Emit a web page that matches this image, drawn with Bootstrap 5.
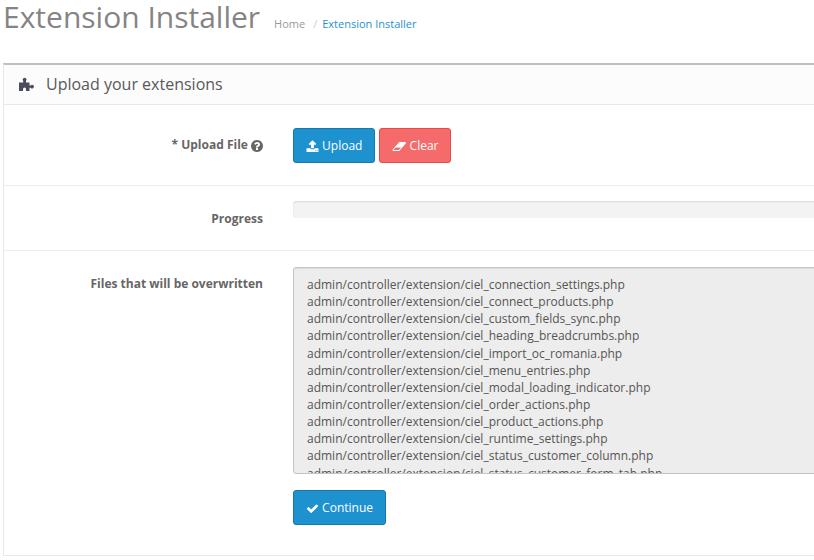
<!DOCTYPE html>
<html lang="en">
<head>
<meta charset="utf-8">
<title>Extension Installer</title>
<link href="https://cdn.jsdelivr.net/npm/bootstrap@5.3.0/dist/css/bootstrap.min.css" rel="stylesheet">
<style>
body{font:12px/1.42857 "Open Sans",sans-serif;color:#666;background:#fff;height:560px;overflow:hidden}
.page-head{height:63px;padding-left:3px}
h1{font-size:30px;line-height:33px;color:#848484;font-weight:400;letter-spacing:0}
.breadcrumb{font-size:11px;margin:16px 0 0 14px;--bs-breadcrumb-item-padding-x:8px;--bs-breadcrumb-divider-color:#ccc}
.breadcrumb a{color:#999;text-decoration:none}
.breadcrumb .active a{color:#1e91cf}
.breadcrumb-item+.breadcrumb-item{padding-left:8px}
.breadcrumb-item+.breadcrumb-item::before{padding-right:5px}
.panel{width:840px;height:493px;margin-left:3px;border:1px solid #e8e8e8;border-top:2px solid #bfbfbf;border-radius:0}
.panel-title{height:40px;padding-left:14px;background:#fcfcfc;border-bottom:1px solid #e8e8e8;font-size:17px;color:#4c4d5a}
.panel-title span{margin-left:11px;font-size:16px;color:#595959}
.form-line{border-bottom:1px solid #ededed}
.form-line:last-child{border:0}
.label-col{width:259px;text-align:right;font-weight:700;flex:none}
.field-col{margin-left:30px;flex:1}
.btn{--bs-btn-font-size:12px;--bs-btn-padding-x:12px;--bs-btn-padding-y:8px;--bs-btn-border-radius:3px;line-height:17px;height:35px;white-space:nowrap}
.btn-primary{--bs-btn-bg:#1e91cf;--bs-btn-border-color:#1978ab}
.btn-danger{--bs-btn-bg:#f56b6b;--bs-btn-border-color:#f24545;--bs-btn-color:#fff}
.progress{height:17px;border-radius:3px;background:#f3f3f3;box-shadow:inset 0 1px 2px rgba(0,0,0,.1);margin-top:15px}
.form-control{height:207px;padding:8px 13px;font-size:12px;line-height:17.14px;border:1px solid #c4c4c4;border-radius:3px;background:#ededed;color:#555;resize:none;overflow:hidden;box-shadow:inset 0 1px 1px rgba(0,0,0,.075)}
svg{fill:currentColor;flex:none}
</style>
</head>
<body>
<header class="page-head d-flex align-items-start">
<h1 class="m-0">Extension Installer</h1>
<ol class="breadcrumb"><li class="breadcrumb-item"><a href="#">Home</a></li><li class="breadcrumb-item active"><a href="#">Extension Installer</a></li></ol>
</header>
<main class="panel">
<div class="panel-title d-flex align-items-center">
<svg width="17" height="17" viewBox="0 0 17 17"><path d="M1 6.5h4.2V5A1.9 1.9 0 1 1 8 5v1.500h3.500v3h1.200a1.800 1.800 0 1 1 0 2.200h-1.200V15H8v-2a1.500 1.500 0 1 0-3 0v2H1z"/></svg>
<span>Upload your extensions</span>
</div>
<form>
<div class="form-line d-flex align-items-center" style="height:81px">
<div class="label-col"><span class="text-req">*</span> Upload File <svg width="12" height="12" viewBox="128 128 1536 1536"><path d="M1024 1376v-192q0-14-9-23t-23-9h-192q-14 0-23 9t-9 23v192q0 14 9 23t23 9h192q14 0 23-9t9-23zm256-672q0-88-55.5-163t-138.500-116-170-41q-243 0-371 213-15 24 8 42l132 100q7 6 19 6 16 0 25-12 53-68 86-92 34-24 86-24 48 0 85.500 26t37.500 59q0 38-20 61t-68 45q-63 28-115.500 86.500t-52.500 125.500v36q0 14 9 23t23 9h192q14 0 23-9t9-23q0-19 21.500-49.500t54.500-49.500q32-18 49-28.500t46-35 44.500-48 28-60.500 12.500-81zm384 192q0 209-103 385.500t-279.500 279.500-385.500 103-385.500-103-279.500-279.500-103-385.500 103-385.500 279.500-279.500 385.500-103 385.500 103 279.500 279.500 103 385.500z"/></svg></div>
<div class="field-col d-flex gap-1">
<button type="button" class="btn btn-primary"><svg width="13" height="13" viewBox="0 0 1792 1792"><path d="M1344 1472q0-26-19-45t-45-19-45 19-19 45 19 45 45 19 45-19 19-45zm256 0q0-26-19-45t-45-19-45 19-19 45 19 45 45 19 45-19 19-45zm128-224v320q0 40-28 68t-68 28h-1472q-40 0-68-28t-28-68v-320q0-40 28-68t68-28h427q21 56 70.500 92t110.500 36h256q61 0 110.500-36t70.500-92h427q40 0 68 28t28 68zm-325-648q-17 40-59 40h-256v448q0 26-19 45t-45 19h-256q-26 0-45-19t-19-45v-448h-256q-42 0-59-40-17-39 14-69l448-448q18-19 45-19t45 19l448 448q31 30 14 69z"/></svg> Upload</button>
<button type="button" class="btn btn-danger"><svg width="14" height="13" viewBox="0 0 1984 1792"><path d="M960 1408l336-384h-768l-336 384h768zm1013-1077q15 34 9.500 71.500t-30.500 65.500l-896 1024q-38 44-96 44h-768q-38 0-69.500-20.500t-47.500-54.500q-15-34-9.500-71.500t30.500-65.500l896-1024q38-44 96-44h768q38 0 69.500 20.500t47.500 54.500z"/></svg> Clear</button>
</div>
</div>
<div class="form-line d-flex" style="height:65px">
<div class="label-col pt-4">Progress</div>
<div class="field-col"><div class="progress"></div></div>
</div>
<div class="form-line d-flex">
<div class="label-col pt-4">Files that will be overwritten</div>
<div class="field-col pt-3 d-flex flex-column align-items-start">
<textarea class="form-control" readonly>admin/controller/extension/ciel_connection_settings.php
admin/controller/extension/ciel_connect_products.php
admin/controller/extension/ciel_custom_fields_sync.php
admin/controller/extension/ciel_heading_breadcrumbs.php
admin/controller/extension/ciel_import_oc_romania.php
admin/controller/extension/ciel_menu_entries.php
admin/controller/extension/ciel_modal_loading_indicator.php
admin/controller/extension/ciel_order_actions.php
admin/controller/extension/ciel_product_actions.php
admin/controller/extension/ciel_runtime_settings.php
admin/controller/extension/ciel_status_customer_column.php
admin/controller/extension/ciel_status_customer_form_tab.php</textarea>
<button type="button" class="btn btn-primary mt-3"><svg width="13" height="13" viewBox="0 0 1792 1792"><path d="M1671 566q0 40-28 68l-724 724-136 136q-28 28-68 28t-68-28l-136-136-362-362q-28-28-28-68t28-68l136-136q28-28 68-28t68 28l294 295 656-657q28-28 68-28t68 28l136 136q28 28 28 68z"/></svg> Continue</button>
</div>
</div>
</form>
</main>
<script src="https://cdn.jsdelivr.net/npm/bootstrap@5.3.0/dist/js/bootstrap.bundle.min.js"></script>
</body>
</html>
